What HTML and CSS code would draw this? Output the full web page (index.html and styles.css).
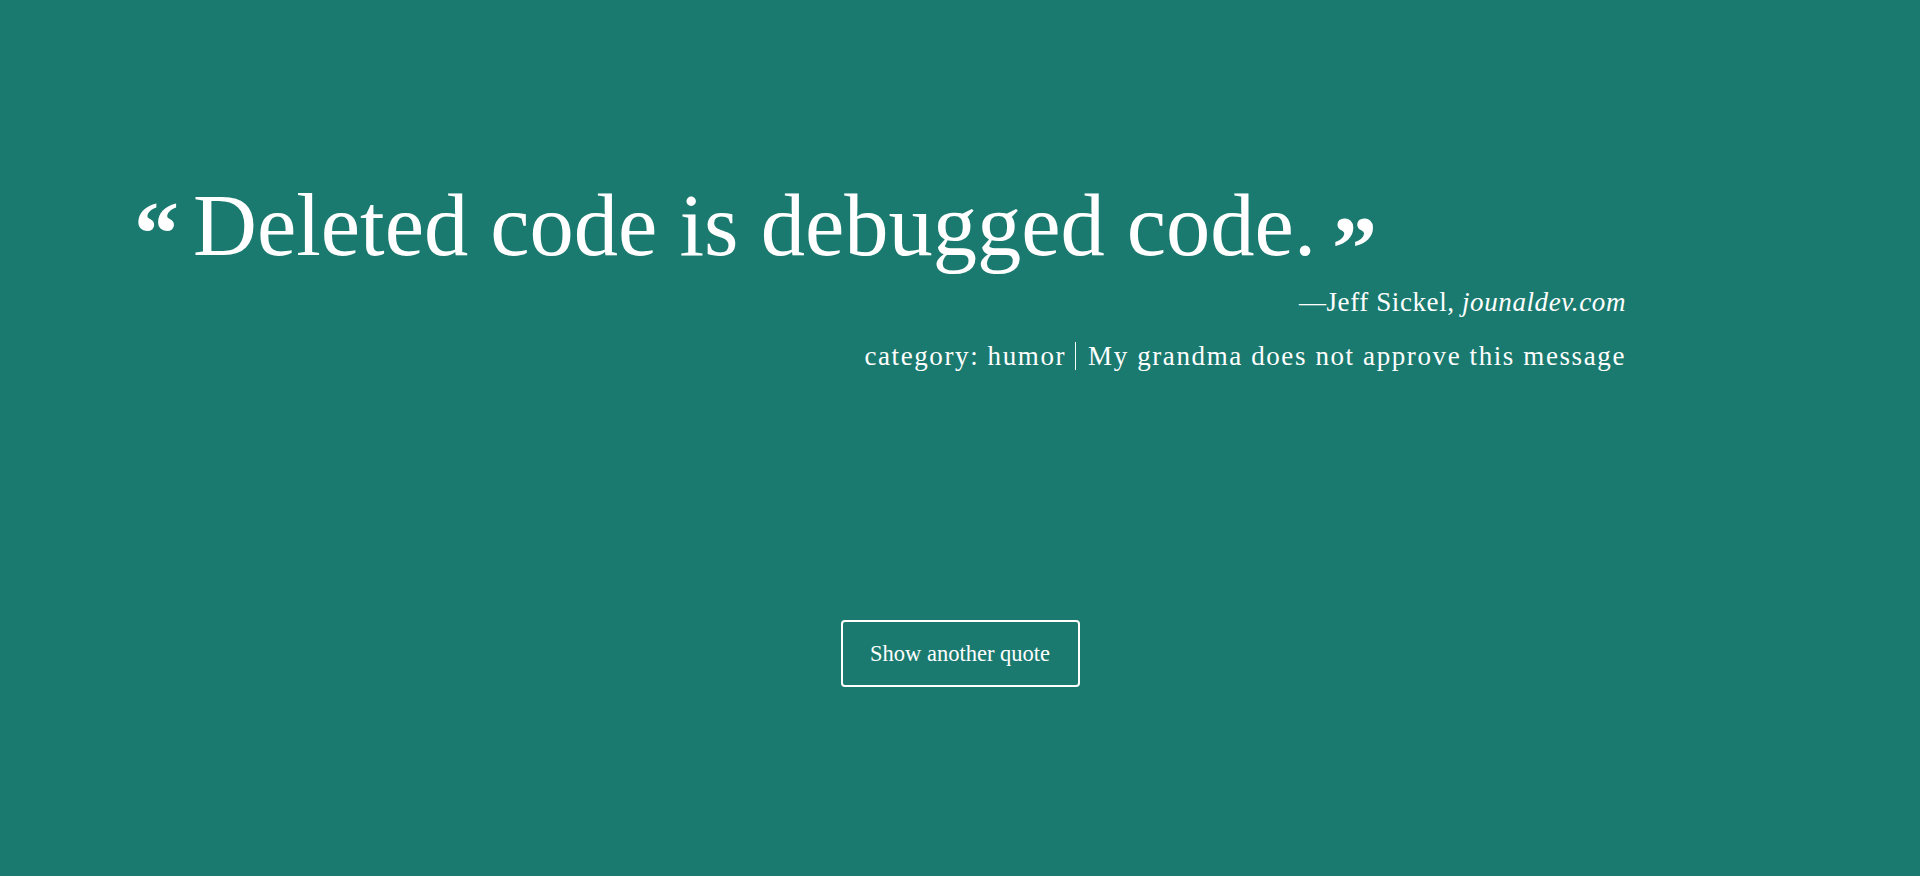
FILE: index.html
```html
<!DOCTYPE html>
<html lang="en">
<head>
<meta charset="utf-8">
<title>Random Quote</title>
<link rel="stylesheet" href="styles.css">
</head>
<body>
<main class="page">
  <section class="quote-box">
    <blockquote class="quote"><span class="mark mark-open">&ldquo;</span>Deleted code is debugged code.<span class="mark mark-close">&rdquo;</span></blockquote>
    <p class="author">&mdash;Jeff Sickel, <cite class="source">jounaldev.com</cite></p>
    <p class="meta">category: humor<span class="sep"></span>My grandma does not approve this message</p>
  </section>
  <div class="actions">
    <button class="btn" type="button">Show another quote</button>
  </div>
</main>
</body>
</html>
```

FILE: styles.css
```css
html, body {
  margin: 0;
  padding: 0;
}
body {
  background: #1b7a6f;
  color: #ffffff;
  font-family: "Liberation Serif", "Times New Roman", serif;
  height: 876px;
  overflow: hidden;
}
.page {
  display: flex;
  flex-direction: column;
  padding: 170px 294px 0 134px;
}
.quote-box {
  display: flex;
  flex-direction: column;
}
.quote {
  margin: 0;
  font-size: 88.5px;
  line-height: 110px;
  white-space: nowrap;
}
.mark {
  font-size: 90px;
  font-weight: bold;
  line-height: 0;
}
.mark-open {
  vertical-align: -9px;
  margin-right: 14px;
}
.mark-close {
  vertical-align: -24px;
  margin-left: 16px;
}
.author {
  margin: 2px 0 0;
  text-align: right;
  font-size: 27px;
  letter-spacing: 0.6px;
  line-height: 40px;
}
.source {
  font-style: italic;
}
.meta {
  margin: 14px 0 0;
  text-align: right;
  font-size: 27px;
  letter-spacing: 1.6px;
  line-height: 40px;
  display: flex;
  justify-content: flex-end;
  align-items: center;
}
.sep {
  display: inline-block;
  width: 0;
  height: 28px;
  border-left: 1px solid #f2fbfa;
  margin: 0 12px 0 9px;
}
.actions {
  display: flex;
  justify-content: center;
  margin-top: 244px;
  margin-left: -134px;
  margin-right: -294px;
}
.btn {
  width: 239px;
  height: 67px;
  background: transparent;
  color: #ffffff;
  border: 2px solid #ffffff;
  border-radius: 4px;
  font-family: "Liberation Serif", "Times New Roman", serif;
  font-size: 22.5px;
  cursor: pointer;
}
```
